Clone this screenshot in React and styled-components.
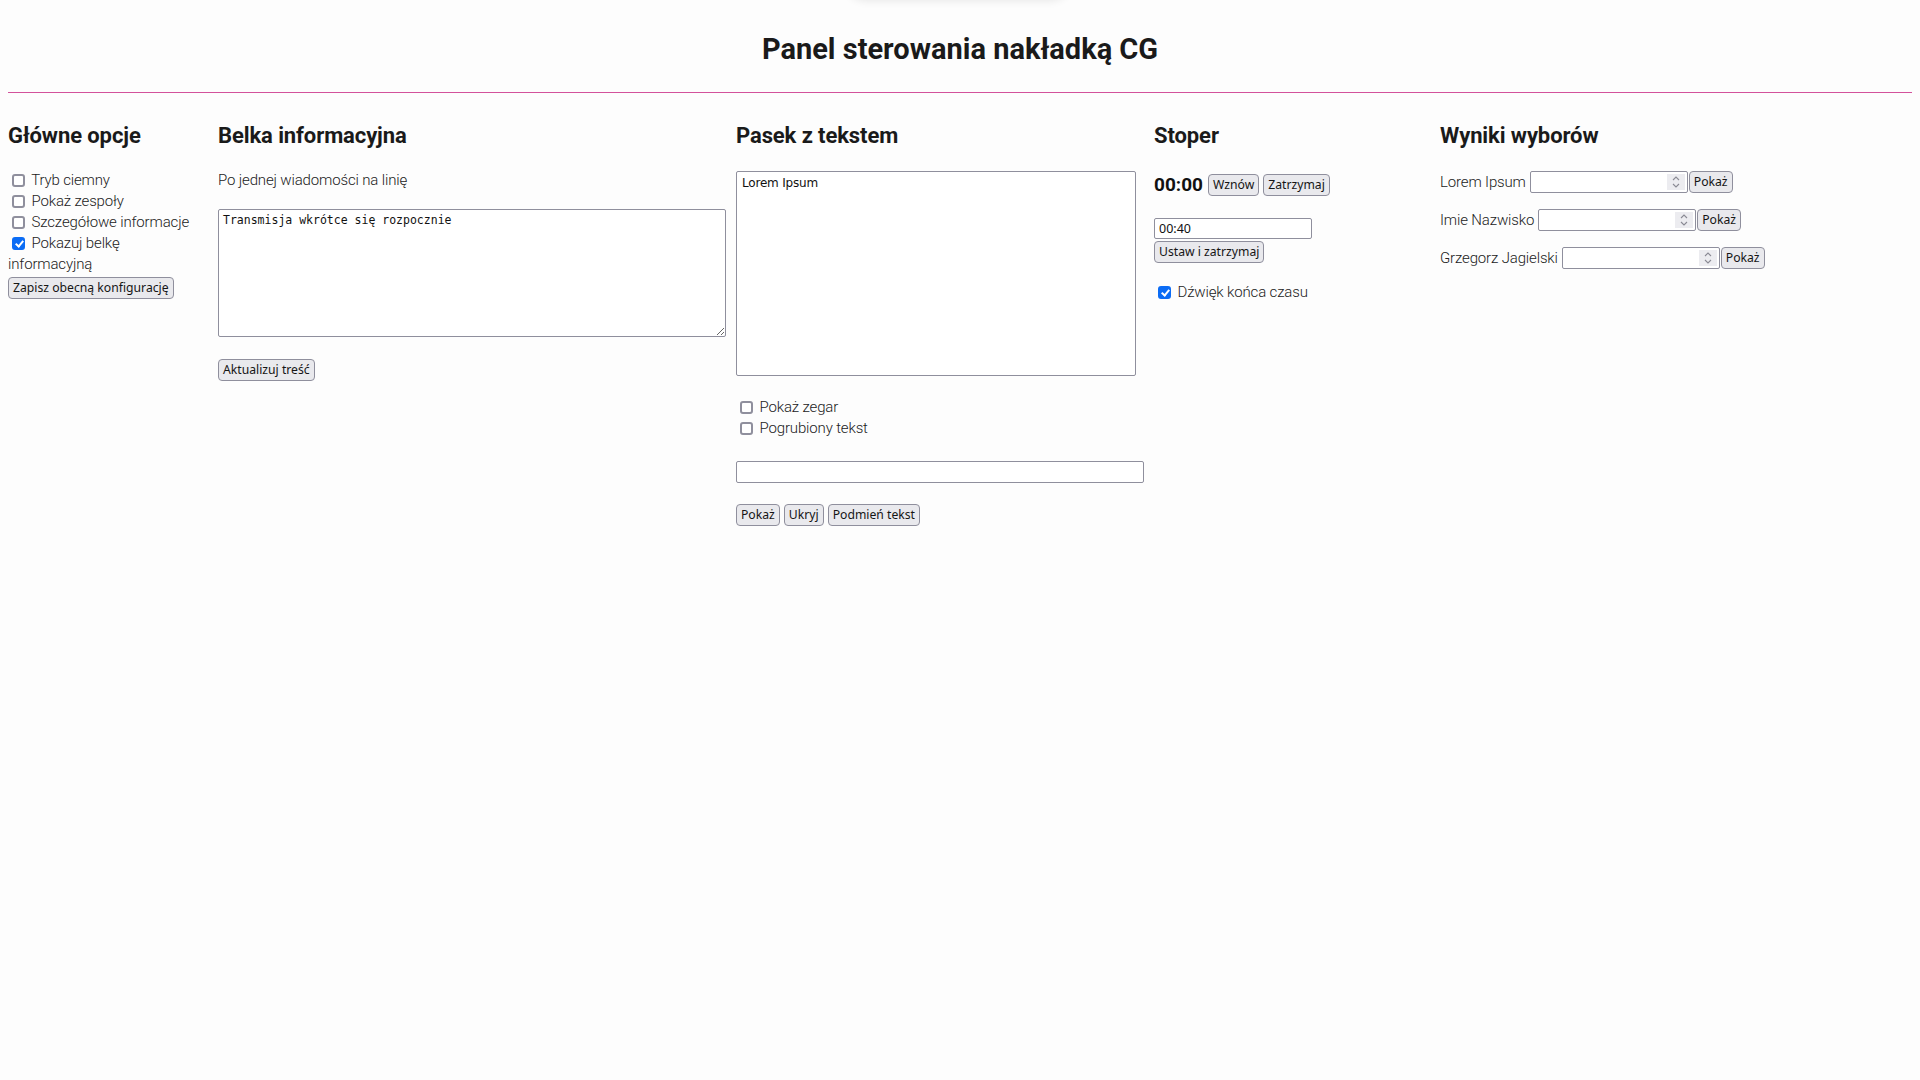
import React from 'react';
import styled, { createGlobalStyle } from 'styled-components';

const GlobalStyle = createGlobalStyle`
  html, body {
    margin: 0;
    padding: 0;
    background: #fdfdfd;
  }
  body {
    font-family: Roboto, "Liberation Sans", sans-serif;
    font-size: 15px;
    font-weight: 300;
    letter-spacing: -0.15px;
    color: #222;
  }
`;

const Page = styled.div`
  position: relative;
  box-sizing: border-box;
  min-height: 1080px;
  padding: 0 8px 8px;
  overflow: hidden;
`;

const TopTab = styled.div`
  position: absolute;
  top: -40px;
  left: calc(50% - 117px);
  width: 230px;
  height: 40px;
  background: #fdfdfd;
  border-radius: 0 0 24px 24px;
  box-shadow: 0 1px 9px rgba(0, 0, 0, 0.09);
`;

const Title = styled.h1`
  margin: 0;
  padding-top: 32px;
  text-align: center;
  font: 700 29px/34px Roboto, "Liberation Sans", sans-serif;
  letter-spacing: normal;
  color: #1a1a1a;
`;

const Divider = styled.div`
  margin-top: 26px;
  border-top: 1px solid #d3529b;
`;

const Columns = styled.div`
  display: grid;
  grid-template-columns: 200px 508px 408px 276px 1fr;
  column-gap: 10px;
  margin-top: 30px;
  align-items: start;
`;

const Section = styled.section`
  display: flex;
  flex-direction: column;
  align-items: flex-start;
`;

const Heading = styled.h2`
  margin: 0;
  font: 700 22px/26px Roboto, "Liberation Sans", sans-serif;
  letter-spacing: -0.1px;
  color: #1a1a1a;
`;

const Lines = styled.div`
  margin-top: ${(p) => p.$top}px;
  max-width: ${(p) => (p.$max ? `${p.$max}px` : 'none')};
`;

const Line = styled.label`
  display: block;
  line-height: 21px;
`;

const Note = styled.p`
  margin: 21px 0 0;
  line-height: 21px;
`;

const Check = styled.input.attrs({ type: 'checkbox' })`
  appearance: none;
  -webkit-appearance: none;
  position: relative;
  top: -1px;
  box-sizing: border-box;
  width: 13px;
  height: 13px;
  margin: 0 3px 0 4px;
  border: 2px solid #8f8f9d;
  border-radius: 3px;
  background: #fff;
  vertical-align: middle;
  &:checked {
    background: #0b6cf5;
    border-color: #0b6cf5;
  }
  &:checked::after {
    content: '';
    position: absolute;
    left: 2.5px;
    top: 0px;
    width: 3px;
    height: 6px;
    border: solid #fff;
    border-width: 0 2px 2px 0;
    transform: rotate(40deg);
  }
`;

const Button = styled.button`
  box-sizing: border-box;
  height: 22px;
  margin: ${(p) => p.$top || 0}px 0 0;
  padding: 0 4px;
  border: 1px solid #8f8f9d;
  border-radius: 4px;
  background: #e9e9ed;
  color: #151515;
  font: 400 12.2px/20px "Noto Sans", Roboto, sans-serif;
  letter-spacing: normal;
  white-space: nowrap;
`;

const MonoArea = styled.textarea`
  display: block;
  box-sizing: border-box;
  width: 508px;
  height: 128px;
  margin-top: 18px;
  padding: 3px 4px;
  border: 1px solid #8f8f9d;
  border-radius: 2px;
  background: #fff;
  color: #111;
  font: 11.5px/15px "DejaVu Sans Mono", monospace;
  letter-spacing: normal;
`;

const TextArea = styled.textarea`
  display: block;
  box-sizing: border-box;
  width: 400px;
  height: 205px;
  margin-top: 22px;
  padding: 3px 5px;
  border: 1px solid #8f8f9d;
  border-radius: 2px;
  background: #fff;
  color: #111;
  resize: none;
  font: 12px/16px "DejaVu Sans", sans-serif;
  letter-spacing: -0.2px;
`;

const TextInput = styled.input`
  box-sizing: border-box;
  display: block;
  width: ${(p) => p.$w}px;
  height: ${(p) => p.$h || 22}px;
  margin-top: ${(p) => p.$top || 0}px;
  padding: 0 4px;
  border: 1px solid #8f8f9d;
  border-radius: 2px;
  background: #fff;
  color: #111;
  font: 400 12.5px "Noto Sans", Roboto, sans-serif;
  letter-spacing: normal;
`;

const ButtonRow = styled.div`
  display: flex;
  gap: 4px;
  margin-top: 21px;
`;

const TimerRow = styled.div`
  display: flex;
  align-items: center;
  gap: 4px;
  margin-top: 25px;
`;

const Timer = styled.span`
  margin-right: 1px;
  font: 700 19px/22px Roboto, sans-serif;
  letter-spacing: normal;
  color: #111;
`;

const ResultList = styled.div`
  display: flex;
  flex-direction: column;
  gap: 16px;
  margin-top: 22px;
`;

const ResultRow = styled.div`
  display: flex;
  align-items: center;
`;

const ResultLabel = styled.span`
  margin-right: 4px;
  line-height: 22px;
`;

const NumberWrap = styled.span`
  position: relative;
  display: inline-flex;
  margin-right: 1px;
`;

const NumberInput = styled.input.attrs({ type: 'number' })`
  box-sizing: border-box;
  width: 158px;
  height: 22px;
  padding: 0 22px 0 4px;
  border: 1px solid #8f8f9d;
  border-radius: 2px;
  background: #fff;
  font: 400 12.5px "Noto Sans", sans-serif;
  -moz-appearance: textfield;
  &::-webkit-inner-spin-button,
  &::-webkit-outer-spin-button {
    -webkit-appearance: none;
    margin: 0;
  }
`;

const Spinner = styled.span`
  position: absolute;
  right: 3px;
  top: 3px;
  width: 18px;
  height: 16px;
  background: #ececf0;
  display: flex;
  align-items: center;
  justify-content: center;
  pointer-events: none;
`;

function SpinIcon() {
  return (
    <svg width="10" height="14" viewBox="0 0 10 14" fill="none" stroke="#8a8a94" strokeWidth="1.1">
      <path d="M2 5 L5 2 L8 5" />
      <path d="M2 9 L5 12 L8 9" />
    </svg>
  );
}

const candidates = ['Lorem Ipsum', 'Imie Nazwisko', 'Grzegorz Jagielski'];

export default function App() {
  return (
    <>
      <GlobalStyle />
      <Page>
        <TopTab />
        <Title>Panel sterowania nakładką CG</Title>
        <Divider />
        <Columns>
          <Section>
            <Heading>Główne opcje</Heading>
            <Lines $top={21} $max={185}>
              <Line><Check /> Tryb ciemny</Line>
              <Line><Check /> Pokaż zespoły</Line>
              <Line><Check /> Szczegółowe informacje</Line>
              <Line><Check defaultChecked /> Pokazuj belkę informacyjną</Line>
            </Lines>
            <Button $top={2}>Zapisz obecną konfigurację</Button>
          </Section>

          <Section>
            <Heading>Belka informacyjna</Heading>
            <Note>Po jednej wiadomości na linię</Note>
            <MonoArea defaultValue="Transmisja wkrótce się rozpocznie" />
            <Button $top={22}>Aktualizuj treść</Button>
          </Section>

          <Section>
            <Heading>Pasek z tekstem</Heading>
            <TextArea defaultValue="Lorem Ipsum" />
            <Lines $top={21}>
              <Line><Check /> Pokaż zegar</Line>
              <Line><Check /> Pogrubiony tekst</Line>
            </Lines>
            <TextInput $w={408} $top={22} />
            <ButtonRow>
              <Button>Pokaż</Button>
              <Button>Ukryj</Button>
              <Button>Podmień tekst</Button>
            </ButtonRow>
          </Section>

          <Section>
            <Heading>Stoper</Heading>
            <TimerRow>
              <Timer>00:00</Timer>
              <Button>Wznów</Button>
              <Button>Zatrzymaj</Button>
            </TimerRow>
            <TextInput $w={158} $h={21} $top={22} defaultValue="00:40" />
            <Button $top={2}>Ustaw i zatrzymaj</Button>
            <Lines $top={19}>
              <Line><Check defaultChecked /> Dźwięk końca czasu</Line>
            </Lines>
          </Section>

          <Section>
            <Heading>Wyniki wyborów</Heading>
            <ResultList>
              {candidates.map((name) => (
                <ResultRow key={name}>
                  <ResultLabel>{name}</ResultLabel>
                  <NumberWrap>
                    <NumberInput />
                    <Spinner><SpinIcon /></Spinner>
                  </NumberWrap>
                  <Button>Pokaż</Button>
                </ResultRow>
              ))}
            </ResultList>
          </Section>
        </Columns>
      </Page>
    </>
  );
}
